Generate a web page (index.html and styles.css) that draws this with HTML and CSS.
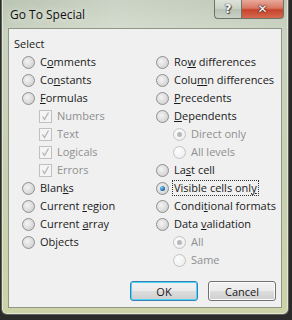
FILE: index.html
```html
<!DOCTYPE html>
<html>
<head>
<meta charset="utf-8">
<link rel="stylesheet" href="styles.css">
</head>
<body>
<div class="window">
  <div class="titlebar">
    <span class="title">Go To Special</span>
    <div class="caption-buttons">
      <div class="cap-btn help"><span>?</span></div>
      <div class="cap-btn close"><span>✕</span></div>
    </div>
  </div>
  <div class="client">
    <div class="section-label">Select</div>
    <div class="options">
      <div class="col">
        <div class="opt"><span class="radio"></span><span class="lbl">C<u>o</u>mments</span></div>
        <div class="opt"><span class="radio"></span><span class="lbl">Co<u>n</u>stants</span></div>
        <div class="opt"><span class="radio"></span><span class="lbl"><u>F</u>ormulas</span></div>
        <div class="opt sub disabled"><span class="check"><svg viewBox="0 0 11 11" width="11" height="11"><path d="M2.5 5.5 L4.5 8.5 L8.5 1.5" fill="none" stroke="#b4b4b4" stroke-width="1.3"/></svg></span><span class="lbl">Numbers</span></div>
        <div class="opt sub disabled"><span class="check"><svg viewBox="0 0 11 11" width="11" height="11"><path d="M2.5 5.5 L4.5 8.5 L8.5 1.5" fill="none" stroke="#b4b4b4" stroke-width="1.3"/></svg></span><span class="lbl">Text</span></div>
        <div class="opt sub disabled"><span class="check"><svg viewBox="0 0 11 11" width="11" height="11"><path d="M2.5 5.5 L4.5 8.5 L8.5 1.5" fill="none" stroke="#b4b4b4" stroke-width="1.3"/></svg></span><span class="lbl">Logicals</span></div>
        <div class="opt sub disabled"><span class="check"><svg viewBox="0 0 11 11" width="11" height="11"><path d="M2.5 5.5 L4.5 8.5 L8.5 1.5" fill="none" stroke="#b4b4b4" stroke-width="1.3"/></svg></span><span class="lbl">Errors</span></div>
        <div class="opt"><span class="radio"></span><span class="lbl">Blan<u>k</u>s</span></div>
        <div class="opt"><span class="radio"></span><span class="lbl">Current <u>r</u>egion</span></div>
        <div class="opt"><span class="radio"></span><span class="lbl">Current <u>a</u>rray</span></div>
        <div class="opt"><span class="radio"></span><span class="lbl">Ob<u>j</u>ects</span></div>
      </div>
      <div class="col">
        <div class="opt"><span class="radio"></span><span class="lbl">Ro<u>w</u> differences</span></div>
        <div class="opt"><span class="radio"></span><span class="lbl">Colu<u>m</u>n differences</span></div>
        <div class="opt"><span class="radio"></span><span class="lbl"><u>P</u>recedents</span></div>
        <div class="opt"><span class="radio"></span><span class="lbl"><u>D</u>ependents</span></div>
        <div class="opt sub disabled"><span class="radio on"></span><span class="lbl">Direct only</span></div>
        <div class="opt sub disabled"><span class="radio"></span><span class="lbl">All levels</span></div>
        <div class="opt"><span class="radio"></span><span class="lbl">La<u>s</u>t cell</span></div>
        <div class="opt"><span class="radio on"></span><span class="lbl focus">Visible cells onl<u>y</u></span></div>
        <div class="opt"><span class="radio"></span><span class="lbl">Condi<u>t</u>ional formats</span></div>
        <div class="opt"><span class="radio"></span><span class="lbl">Data <u>v</u>alidation</span></div>
        <div class="opt sub disabled"><span class="radio on"></span><span class="lbl">All</span></div>
        <div class="opt sub disabled"><span class="radio"></span><span class="lbl">Same</span></div>
      </div>
    </div>
    <div class="buttons">
      <div class="btn default">OK</div>
      <div class="btn">Cancel</div>
    </div>
  </div>
</div>
</body>
</html>
```
FILE: styles.css
```css
html, body {
  margin: 0;
  padding: 0;
}
body {
  width: 292px;
  height: 320px;
  background: #2b2b2b;
  font-family: "Open Sans", "Noto Sans", sans-serif;
  font-size: 11px;
  color: #1a1a1a;
  overflow: hidden;
}
.window {
  width: 288px;
  height: 315px;
  margin-left: 1px;
  box-sizing: border-box;
  border: 1px solid #5d6355;
  border-top: none;
  border-radius: 0 0 6px 6px;
  background: linear-gradient(180deg, #b9c4b2 0%, #c9d2c0 10%, #c9d0b0 60%, #cdd3a6 100%);
  box-shadow: inset 1px 0 0 #e2e6d6, inset -1px 0 0 #e2e6d6, inset 0 -1px 0 #e2e6d6;
  display: flex;
  flex-direction: column;
}
.titlebar {
  height: 28px;
  display: flex;
  justify-content: space-between;
  align-items: flex-start;
  background: linear-gradient(90deg, rgba(255,255,255,0) 0%, rgba(255,255,255,0.25) 40%, rgba(255,255,255,0.05) 100%);
}
.title {
  margin-left: 8px;
  margin-top: 6px;
  font-size: 12px;
  color: #111;
  text-shadow: 0 0 6px rgba(255,255,255,0.9);
}
.caption-buttons {
  display: flex;
  margin-right: 4px;
}
.cap-btn {
  height: 19px;
  box-sizing: border-box;
  border: 1px solid #6d7368;
  border-top: none;
  display: flex;
  align-items: center;
  justify-content: center;
  color: #fff;
  font-family: "DejaVu Sans", sans-serif;
  font-weight: bold;
}
.cap-btn.help {
  width: 27px;
  border-radius: 0 0 0 4px;
  border-right: none;
  background: linear-gradient(180deg, #dde3d8 0%, #c8d0c4 50%, #b7c1b4 51%, #c9d1c6 100%);
  font-size: 12px;
}
.cap-btn.help span {
  text-shadow: 0 0 1px #333, 0 0 1px #333, 1px 1px 1px #444;
}
.cap-btn.close {
  width: 43px;
  border-radius: 0 0 4px 0;
  background: linear-gradient(180deg, #e9a99b 0%, #d87762 45%, #c5432b 55%, #d66a4e 100%);
  font-size: 12px;
}
.cap-btn.close span {
  text-shadow: 0 0 1px #422, 0 0 1px #422, 0 0 2px #422;
}
.client {
  flex: 1;
  margin: 0 6px 6px 6px;
  background: #f0f0f0;
  border: 1px solid #8e9886;
  position: relative;
}
.section-label {
  margin: 7px 0 0 5px;
  height: 15px;
  line-height: 15px;
}
.options {
  display: grid;
  grid-template-columns: 134px 1fr;
  margin: 2px 0 0 13px;
}
.opt {
  height: 18px;
  display: flex;
  align-items: center;
}
.opt.sub {
  padding-left: 17px;
}
.radio {
  width: 11px;
  height: 11px;
  border-radius: 50%;
  border: 1px solid #8f8f8f;
  background: radial-gradient(circle at 40% 40%, #f4f4f4 0%, #dcdcdc 55%, #c6c6c6 100%);
  box-sizing: content-box;
  display: flex;
  align-items: center;
  justify-content: center;
  flex: none;
}
.radio.on::after {
  content: "";
  width: 5px;
  height: 5px;
  border-radius: 50%;
  background: radial-gradient(circle at 35% 35%, #8ad0f5 0%, #1f6fb0 60%, #0d3f73 100%);
}
.disabled .radio {
  border-color: #c4c4c4;
  background: radial-gradient(circle at 35% 35%, #fdfdfd 0%, #f0f0f0 70%, #e6e6e6 100%);
}
.disabled .radio.on::after {
  background: #b8b8b8;
}
.check {
  width: 11px;
  height: 11px;
  border: 1px solid #c0c0c0;
  background: #f4f4f4;
  display: flex;
  flex: none;
}
.lbl {
  margin-left: 5px;
  line-height: 14px;
  white-space: nowrap;
}
.disabled .lbl {
  color: #8f8f8f;
}
.lbl u {
  text-decoration-thickness: 1px;
  text-underline-offset: 1px;
}
.lbl.focus {
  outline: 1px dotted #333;
  outline-offset: 0;
  padding: 0 1px;
  margin-left: 4px;
}
.buttons {
  position: absolute;
  right: 5px;
  bottom: 6px;
  display: flex;
  gap: 10px;
}
.btn {
  width: 68px;
  height: 20px;
  box-sizing: border-box;
  border: 1px solid #707070;
  border-radius: 3px;
  background: linear-gradient(180deg, #f2f2f2 0%, #ebebeb 50%, #dddddd 51%, #cfcfcf 100%);
  box-shadow: inset 0 0 0 1px #fcfcfc;
  display: flex;
  align-items: center;
  justify-content: center;
}
.btn.default {
  border-color: #3c7fb1;
  box-shadow: inset 0 0 0 1px #48d7fb;
}
```
